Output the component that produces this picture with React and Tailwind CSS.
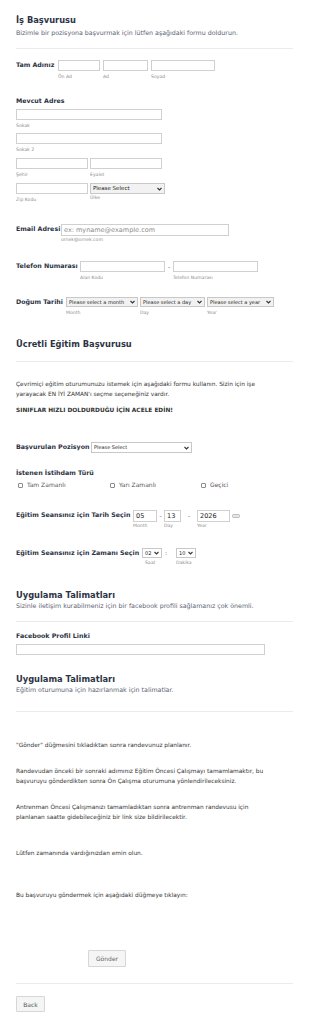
import React from "react";

const F = { fontFamily: "'DejaVu Sans', Verdana, sans-serif" };

function Chevron() {
  return (
    <svg width="5" height="4" viewBox="0 0 10 7" className="shrink-0">
      <path d="M1 1.5 L5 5.5 L9 1.5" fill="none" stroke="#333" strokeWidth="2.2" />
    </svg>
  );
}

function Sel({ w, h = 10, text, bg = "bg-[#f2f2f2]", tc = "text-[5px]" }) {
  return (
    <div
      className={`flex items-center justify-between border border-[#c8c8c8] ${bg} px-[2px] ${tc} text-[#222] leading-none`}
      style={{ width: w, height: h }}
    >
      <span className="whitespace-nowrap">{text}</span>
      <Chevron />
    </div>
  );
}

function Inp({ w, h = 11, value, placeholder }) {
  return (
    <div
      className="flex items-center border border-[#d0d0d0] bg-white px-[2px] text-[6.5px] leading-none text-[#222]"
      style={{ width: w, height: h }}
    >
      {value ? <span>{value}</span> : placeholder ? <span className="text-[#8a8a8a] text-[6.5px]">{placeholder}</span> : null}
    </div>
  );
}

function Sub({ children, cls = "mt-[2px]" }) {
  return <div className={`${cls} h-[8px] text-[4.6px] leading-[8px] text-[#8c8c8c] whitespace-nowrap`}>{children}</div>;
}

function Lbl({ children }) {
  return <div className="text-[6.3px] font-bold leading-[10px] text-[#2c3345] whitespace-nowrap">{children}</div>;
}

function Divider({ mt }) {
  return <div className={`${mt} h-px w-[277px] bg-[#ebebeb]`} />;
}

function Heading({ children, mt }) {
  return <div className={`${mt} text-[8.3px] font-bold leading-[12px] text-[#2c3345]`}>{children}</div>;
}

function Desc({ children }) {
  return <div className="text-[6.3px] leading-[10px] text-[#5b6272]">{children}</div>;
}

function P({ children, mt, bold }) {
  return (
    <div className={`${mt} text-[5.85px] leading-[10px] text-[#333] ${bold ? "font-bold" : ""}`}>{children}</div>
  );
}

function Check({ label, w }) {
  return (
    <div className="flex items-center gap-[4px]" style={{ width: w }}>
      <div className="h-[5px] w-[5px] rounded-[1px] border border-[#8c8c8c] bg-white" />
      <span className="text-[6px] text-[#555] leading-[10px]">{label}</span>
    </div>
  );
}

export default function App() {
  return (
    <div className="min-h-[1023px] w-[310px] bg-white pl-[16px] pt-[14px]" style={F}>
      <Heading mt="mt-0">İş Başvurusu</Heading>
      <div className="mt-[2px]">
        <Desc>Bizimle bir pozisyona başvurmak için lütfen aşağıdaki formu doldurun.</Desc>
      </div>
      <Divider mt="mt-[10px]" />

      {/* Tam Adınız */}
      <div className="mt-[11px] flex items-start">
        <div className="w-[42px]"><Lbl>Tam Adınız</Lbl></div>
        <div className="flex gap-[3px]">
          <div><Inp w={42} /><Sub>Ön Ad</Sub></div>
          <div><Inp w={45} /><Sub>Ad</Sub></div>
          <div><Inp w={64} /><Sub>Soyad</Sub></div>
        </div>
      </div>

      {/* Mevcut Adres */}
      <div className="mt-[15px]"><Lbl>Mevcut Adres</Lbl></div>
      <div className="mt-[3px]"><Inp w={146} /><Sub>Sokak</Sub></div>
      <div className="mt-[3px]"><Inp w={146} /><Sub>Sokak 2</Sub></div>
      <div className="mt-[4px] flex gap-[2px]">
        <div><Inp w={72} /><Sub>Şehir</Sub></div>
        <div><Inp w={72} /><Sub>Eyalet</Sub></div>
      </div>
      <div className="mt-[4px] flex gap-[2px]">
        <div><Inp w={72} /><Sub>Zip Kodu</Sub></div>
        <div><Sel w={75} h={11} text="Please Select" tc="text-[5.5px]" /><Sub cls="mt-[0px]">Ülke</Sub></div>
      </div>

      {/* Email */}
      <div className="mt-[20px] flex items-start">
        <div className="w-[45px]"><Lbl>Email Adresi</Lbl></div>
        <div>
          <Inp w={168} h={12} placeholder="ex: myname@example.com" />
          <Sub cls="mt-0">ornek@ornek.com</Sub>
        </div>
      </div>

      {/* Telefon */}
      <div className="mt-[17px] flex items-start">
        <div className="w-[64px]"><Lbl>Telefon Numarası</Lbl></div>
        <div>
          <Inp w={85} />
          <Sub>Alan Kodu</Sub>
        </div>
        <div className="w-[8px] text-center text-[6px] leading-[11px] text-[#555]">-</div>
        <div>
          <Inp w={85} />
          <Sub>Telefon Numarası</Sub>
        </div>
      </div>

      {/* Doğum Tarihi */}
      <div className="mt-[15px] flex items-start">
        <div className="w-[50px]"><Lbl>Doğum Tarihi</Lbl></div>
        <div className="flex gap-[2px]">
          <div><Sel w={72} text="Please select a month" /><Sub>Month</Sub></div>
          <div><Sel w={65} text="Please select a day" /><Sub>Day</Sub></div>
          <div><Sel w={67} text="Please select a year" /><Sub>Year</Sub></div>
        </div>
      </div>

      <Heading mt="mt-[21px]">Ücretli Eğitim Başvurusu</Heading>
      <Divider mt="mt-[11px]" />

      <P mt="mt-[17px]">
        Çevrimiçi eğitim oturumunuzu istemek için aşağıdaki formu kullanın. Sizin için işe
        <br />
        yarayacak EN İYİ ZAMAN'ı seçme seçeneğiniz vardır.
      </P>
      <P mt="mt-[6px]" bold>SINIFLAR HIZLI DOLDURDUĞU İÇİN ACELE EDİN!</P>

      <div className="mt-[27px] flex items-start">
        <div className="w-[75px]"><Lbl>Başvurulan Pozisyon</Lbl></div>
        <Sel w={101} h={11} text="Please Select" bg="bg-white" />
      </div>

      <div className="mt-[15px]"><Lbl>İstenen İstihdam Türü</Lbl></div>
      <div className="mt-[2px] flex pl-[2px]">
        <Check label="Tam Zamanlı" w={92} />
        <Check label="Yarı Zamanlı" w={91} />
        <Check label="Geçici" w={80} />
      </div>

      {/* Tarih */}
      <div className="mt-[20px] flex items-start">
        <div className="w-[117px]"><Lbl>Eğitim Seansınız için Tarih Seçin</Lbl></div>
        <div><Inp w={24} h={12} value="05" /><Sub cls="mt-0">Month</Sub></div>
        <div className="w-[7px] text-center text-[6px] leading-[12px] text-[#555]">-</div>
        <div><Inp w={17} h={12} value="13" /><Sub cls="mt-0">Day</Sub></div>
        <div className="w-[16px] text-center text-[6px] leading-[12px] text-[#555]">-</div>
        <div><Inp w={33} h={12} value="2026" /><Sub cls="mt-0">Year</Sub></div>
        <div className="ml-[2px] flex h-[12px] items-center">
          <svg width="8" height="4" viewBox="0 0 16 8">
            <rect x="1" y="1" width="14" height="6" rx="2" fill="none" stroke="#999" strokeWidth="1.3" />
            <line x1="2" y1="4" x2="14" y2="4" stroke="#999" strokeWidth="1" />
          </svg>
        </div>
      </div>

      {/* Zaman */}
      <div className="mt-[18px] flex items-start">
        <div className="w-[126px]"><Lbl>Eğitim Seansınız için Zamanı Seçin</Lbl></div>
        <div><Sel w={20} h={10} text="02" bg="bg-white" /><Sub cls="mt-px">&nbsp;&nbsp;Saat</Sub></div>
        <div className="w-[14px] pl-[3px] text-[6px] leading-[10px] text-[#555]">:</div>
        <div><Sel w={20} h={10} text="10" bg="bg-white" /><Sub cls="mt-px">Dakika</Sub></div>
      </div>

      <Heading mt="mt-[22px]">Uygulama Talimatları</Heading>
      <Desc>Sizinle iletişim kurabilmeniz için bir facebook profili sağlamanız çok önemli.</Desc>
      <Divider mt="mt-[10px]" />
      <div className="mt-[9px]"><Lbl>Facebook Profil Linki</Lbl></div>
      <div className="mt-[3px]"><Inp w={249} /></div>

      <Heading mt="mt-[18px]">Uygulama Talimatları</Heading>
      <Desc>Eğitim oturumuna için hazırlanmak için talimatlar.</Desc>
      <Divider mt="mt-[16px]" />

      <P mt="mt-[28px]">"Gönder" düğmesini tıkladıktan sonra randevunuz planlanır.</P>
      <P mt="mt-[16px]">
        Randevudan önceki bir sonraki adımınız Eğitim Öncesi Çalışmayı tamamlamaktır, bu
        <br />
        başvuruyu gönderdikten sonra Ön Çalışma oturumuna yönlendirileceksiniz.
      </P>
      <P mt="mt-[16px]">
        Antrenman Öncesi Çalışmanızı tamamladıktan sonra antrenman randevusu için
        <br />
        planlanan saatte gidebileceğiniz bir link size bildirilecektir.
      </P>
      <P mt="mt-[26px]">Lütfen zamanında vardığınızdan emin olun.</P>
      <P mt="mt-[32px]">Bu başvuruyu göndermek için aşağıdaki düğmeye tıklayın:</P>

      <div className="mt-[50px] pl-[72px]">
        <button className="flex h-[17px] w-[38px] items-center justify-center rounded-[1px] border border-[#d6d6d6] bg-[#f5f5f5] text-[6px] text-[#666]">
          Gönder
        </button>
      </div>
      <Divider mt="mt-[16px]" />
      <div className="mt-[12px]">
        <button className="flex h-[16px] w-[29px] items-center justify-center rounded-[1px] border border-[#d6d6d6] bg-[#f5f5f5] text-[6px] text-[#555]">
          Back
        </button>
      </div>
    </div>
  );
}
